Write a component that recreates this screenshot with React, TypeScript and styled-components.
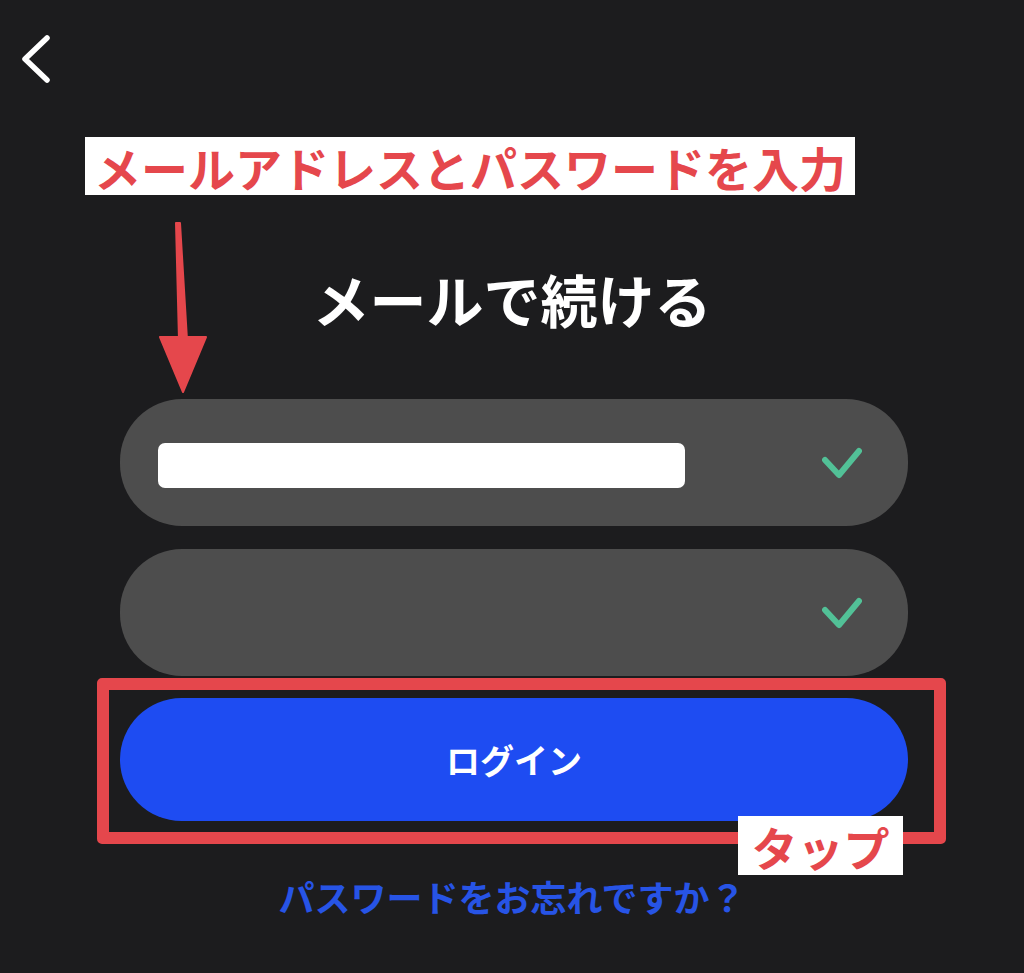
import { createGlobalStyle, styled } from 'styled-components';

const GlobalStyle = createGlobalStyle`
  html, body {
    margin: 0;
    padding: 0;
    background: #1c1c1e;
  }
  body {
    font-family: 'Noto Sans CJK JP', 'Noto Sans', sans-serif;
  }
`;

const Screen = styled.div`
  position: relative;
  width: 1024px;
  height: 973px;
  background: #1c1c1e;
  display: flex;
  flex-direction: column;
  overflow: hidden;
`;

const Header = styled.div`
  height: 137px;
  padding: 34px 0 0 20px;
  box-sizing: border-box;
`;

const BackButton = styled.button`
  display: block;
  padding: 0;
  border: none;
  background: transparent;
  width: 32px;
  height: 50px;
`;

const Callout = styled.div`
  margin-left: 85px;
  width: 770px;
  height: 58px;
  background: #ffffff;
  color: #e5474c;
  font-size: 47px;
  font-weight: 600;
  display: flex;
  align-items: center;
  justify-content: center;
  line-height: 1;
`;

const Title = styled.h1`
  margin: 70px 0 0;
  text-align: center;
  color: #ffffff;
  font-size: 57px;
  line-height: 67px;
  font-weight: 600;
`;

const Fields = styled.div`
  margin: 67px 0 0 120px;
  width: 788px;
  display: flex;
  flex-direction: column;
  gap: 23px;
`;

const Field = styled.div`
  height: 127px;
  border-radius: 62px;
  background: #4d4d4d;
  display: flex;
  align-items: center;
  justify-content: space-between;
  padding: 0 46px 0 38px;
  box-sizing: border-box;
`;

const Masked = styled.div`
  width: 527px;
  height: 45px;
  margin-top: 6px;
  border-radius: 7px;
  background: #ffffff;
`;

const Frame = styled.div`
  position: relative;
  margin: 2px 0 0 97px;
  width: 849px;
  border: 12px solid #e5474c;
  border-radius: 5px;
  padding: 8px 27px 11px 11px;
  box-sizing: border-box;
`;

const LoginButton = styled.button`
  display: flex;
  align-items: center;
  justify-content: center;
  width: 788px;
  height: 123px;
  border: none;
  border-radius: 62px;
  background: #1e4cf2;
  color: #ffffff;
  font-family: inherit;
  font-size: 34px;
  font-weight: 700;
`;

const TapLabel = styled.div`
  position: absolute;
  right: 31px;
  top: 126px;
  width: 165px;
  height: 59px;
  background: #ffffff;
  color: #e5474c;
  font-size: 46px;
  font-weight: 700;
  display: flex;
  align-items: center;
  justify-content: center;
  line-height: 1;
`;

const Forgot = styled.a`
  margin-top: 31px;
  text-align: center;
  color: #2754e6;
  font-size: 36px;
  line-height: 42px;
  font-weight: 700;
`;

const Arrow = styled.svg`
  position: absolute;
  left: 158px;
  top: 220px;
`;

const Check = () => (
  <svg width="40" height="32" viewBox="0 0 40 32">
    <polyline
      points="3,13 17,28 37,4"
      fill="none"
      stroke="#52c197"
      strokeWidth="6"
      strokeLinecap="round"
      strokeLinejoin="round"
    />
  </svg>
);

const App = () => {
  return (
    <Screen>
      <GlobalStyle />
      <Header>
        <BackButton aria-label="戻る">
          <svg width="32" height="50" viewBox="0 0 32 50">
            <polyline
              points="27,4 5,25 27,46"
              fill="none"
              stroke="#ffffff"
              strokeWidth="5.5"
              strokeLinecap="round"
              strokeLinejoin="round"
            />
          </svg>
        </BackButton>
      </Header>
      <Callout>メールアドレスとパスワードを入力</Callout>
      <Title>メールで続ける</Title>
      <Fields>
        <Field>
          <Masked />
          <Check />
        </Field>
        <Field>
          <span />
          <Check />
        </Field>
      </Fields>
      <Frame>
        <LoginButton>ログイン</LoginButton>
        <TapLabel>タップ</TapLabel>
      </Frame>
      <Forgot>パスワードをお忘れですか？</Forgot>
      <Arrow width="50" height="175" viewBox="0 0 50 175">
        <polygon
          points="18,3 22,3 29,120 21,120"
          fill="#e5474c"
          stroke="#e5474c"
          strokeWidth="2"
          strokeLinejoin="round"
        />
        <polygon
          points="2,117 48,117 25,172"
          fill="#e5474c"
          stroke="#e5474c"
          strokeWidth="2"
          strokeLinejoin="round"
        />
      </Arrow>
    </Screen>
  );
};

export default App;
